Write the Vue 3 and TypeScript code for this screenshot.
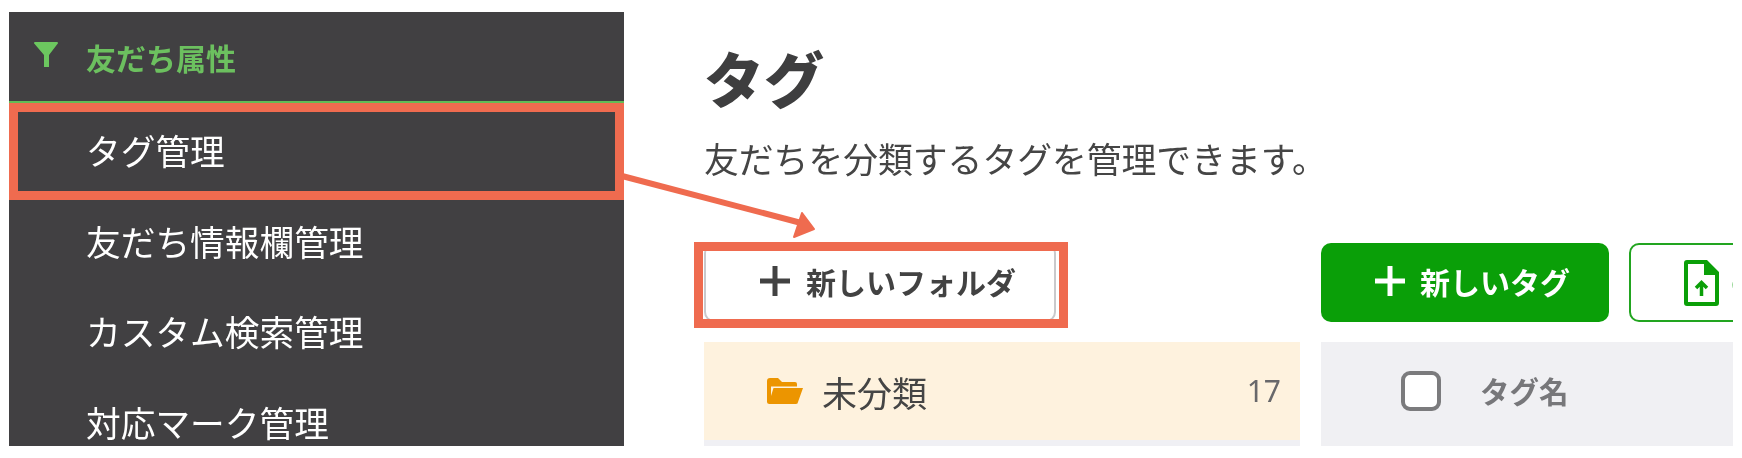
<script setup lang="ts">
const menuItems: string[] = ['タグ管理', '友だち情報欄管理', 'カスタム検索管理', '対応マーク管理']
</script>

<template>
  <div class="page">
    <aside class="sidebar">
      <header class="side-head">
        <svg class="funnel" viewBox="0 0 24 25" aria-hidden="true">
          <path d="M1 0H23a1 1 0 0 1 .8 1.6L15 13V25H10V13L.2 1.6A1 1 0 0 1 1 0z" />
        </svg>
        <span class="side-title">友だち属性</span>
      </header>
      <ul class="menu">
        <li v-for="item in menuItems" :key="item" class="menu-item">{{ item }}</li>
      </ul>
    </aside>

    <main class="main">
      <h1 class="title">タグ</h1>
      <p class="lead">友だちを分類するタグを管理できます。</p>
      <div class="columns">
        <section class="col-left">
          <div class="toolbar">
            <button class="btn btn-folder" type="button">
              <svg class="plus" viewBox="0 0 30 30" aria-hidden="true"><path d="M15 0V30M0 15H30" /></svg>
              <span>新しいフォルダ</span>
            </button>
          </div>
          <div class="folder-row">
            <svg class="folder" viewBox="0 0 36 26" aria-hidden="true">
              <path fill-rule="evenodd" d="M0 3a3 3 0 0 1 3-3h8l4 4h13a2 2 0 0 1 2 2v4h6l-5 14a2 2 0 0 1-2 2H2.500a2.500 2.500 0 0 1-2.500-2.500zM4 8.500h26v1.500H6.500L4 18z" />
            </svg>
            <span class="folder-name">未分類</span>
            <span class="folder-count">17</span>
          </div>
        </section>
        <section class="col-right">
          <div class="toolbar">
            <button class="btn btn-tag" type="button">
              <svg class="plus" viewBox="0 0 30 30" aria-hidden="true"><path d="M15 0V30M0 15H30" /></svg>
              <span>新しいタグ</span>
            </button>
            <button class="btn btn-import" type="button">
              <svg class="file" viewBox="0 0 35 46" aria-hidden="true">
                <path fill-rule="evenodd" d="M3 0H23L35 12V43a3 3 0 0 1-3 3H3a3 3 0 0 1-3-3V3a3 3 0 0 1 3-3zM4 4V42H31V15H20V4z" />
                <path class="file-arrow" d="M17.500 36V23M12 28L17.500 22.500L23 28" />
              </svg>
              <span>CSVインポート</span>
            </button>
          </div>
          <div class="table-head">
            <span class="checkbox"></span>
            <span class="th">タグ名</span>
          </div>
        </section>
      </div>
    </main>

    <svg class="annotations" viewBox="0 0 1742 458" aria-hidden="true">
      <rect class="box" x="13.500" y="107.500" width="606" height="88" />
      <rect class="box" x="698.500" y="246.500" width="365" height="77" />
      <path class="arrow-line" d="M622 176L805 224" />
      <path class="arrow-head" d="M802 213L814 229L794 237z" />
    </svg>
  </div>
</template>

<style scoped>
.page {
  position: relative;
  width: 1742px;
  height: 458px;
  display: flex;
  align-items: flex-start;
  padding: 12px 9px 0;
  box-sizing: border-box;
  overflow: hidden;
  background: #fff;
  color: #404040;
  font-family: "Noto Sans CJK JP", "Noto Sans", sans-serif;
  filter: blur(0.5px);
}

.sidebar {
  flex: 0 0 615px;
  height: 434px;
  background: #414042;
  overflow: hidden;
  color: #fff;
}

.side-head {
  height: 84px;
  display: flex;
  align-items: center;
  padding: 5px 0 0 25px;
  border-bottom: 2px solid #62bb56;
}

.funnel {
  width: 24px;
  height: 25px;
  margin-top: -9px;
  fill: #6cc75f;
  flex: none;
}

.side-title {
  margin-left: 28px;
  font-size: 30px;
  font-weight: 700;
  color: #6cc05f;
  line-height: 1;
  position: relative;
  top: -2px;
}

.menu {
  list-style: none;
  margin: 0;
  padding: 2px 0 0 77px;
}

.menu-item {
  height: 90.500px;
  line-height: 90.500px;
  font-size: 34.700px;
  white-space: nowrap;
}

.main {
  flex: 0 0 1029px;
  margin-left: 80px;
  overflow: hidden;
  height: 435px;
}

.title {
  margin: 25px 0 0;
  font-size: 60px;
  line-height: 80px;
  font-weight: 900;
  color: #3e3e3f;
}

.lead {
  margin: 16px 0 0;
  font-size: 34.800px;
  line-height: 50px;
  color: #454545;
  white-space: nowrap;
}

.columns {
  display: grid;
  grid-template-columns: 596px 412px;
  column-gap: 21px;
  margin-top: 60px;
}

.toolbar {
  display: flex;
  gap: 20px;
  height: 79px;
  margin-bottom: 20px;
}

.btn {
  height: 79px;
  display: flex;
  align-items: center;
  padding: 0 0 3px;
  box-sizing: border-box;
  border-radius: 10px;
  font: inherit;
  font-size: 30px;
  font-weight: 700;
  white-space: nowrap;
}

.plus {
  width: 30px;
  height: 30px;
  flex: none;
  fill: none;
  stroke: currentColor;
  stroke-width: 5;
}

.btn-folder {
  width: 352px;
  background: #fff;
  border: 2px solid #c9c9cc;
  color: #424242;
  padding-left: 54px;
  gap: 16px;
}

.btn-tag {
  flex: 0 0 288px;
  background: #0a9f08;
  border: none;
  color: #fff;
  padding-left: 54px;
  gap: 15px;
}

.btn-import {
  flex: 0 0 auto;
  width: 300px;
  background: #fff;
  border: 2px solid #22a520;
  color: #0a9f08;
  padding-left: 53px;
  padding-bottom: 0;
  gap: 12px;
}

.file {
  width: 35px;
  height: 46px;
  flex: none;
  fill: #0a9f08;
}

.file-arrow {
  fill: none;
  stroke: #0a9f08;
  stroke-width: 3.500;
}

.folder-row {
  height: 98px;
  display: flex;
  align-items: center;
  background: #fef2de;
  border-bottom: 6px solid #f0f0f4;
  padding: 0 19px 0 63px;
}

.folder {
  width: 36px;
  height: 26px;
  fill: #ec9500;
  flex: none;
}

.folder-name {
  margin-left: 19px;
  font-size: 35px;
  line-height: 1;
  color: #454545;
}

.folder-count {
  margin-left: auto;
  font-size: 30px;
  line-height: 1;
  color: #68686b;
  font-family: "Noto Sans", sans-serif;
}

.table-head {
  height: 104px;
  display: flex;
  align-items: center;
  box-sizing: border-box;
  background: #f0f0f3;
  padding: 0 0 6px 80px;
}

.checkbox {
  width: 40px;
  height: 40px;
  box-sizing: border-box;
  border: 4px solid #7b7b7d;
  border-radius: 9px;
  background: #fff;
  flex: none;
}

.th {
  margin-left: 39px;
  font-size: 29.500px;
  font-weight: 700;
  line-height: 1;
  color: #77777a;
}

.annotations {
  position: absolute;
  left: 0;
  top: 0;
  width: 1742px;
  height: 458px;
  pointer-events: none;
}

.box {
  fill: none;
  stroke: #ef6b4f;
  stroke-width: 9;
}

.arrow-line {
  fill: none;
  stroke: #ef6b4f;
  stroke-width: 6;
}

.arrow-head {
  fill: #ef6b4f;
  stroke: #ef6b4f;
  stroke-width: 2;
  stroke-linejoin: round;
}
</style>
